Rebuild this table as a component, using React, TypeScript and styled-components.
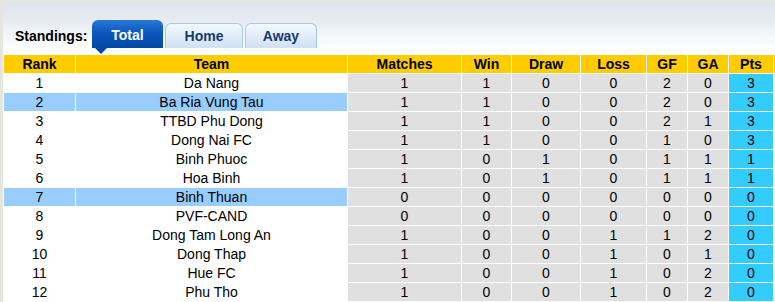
import React from "react"
import styled, { createGlobalStyle } from "styled-components"

const GlobalStyle = createGlobalStyle`
    html, body {
        margin: 0;
        padding: 0;
        overflow: hidden;
        background: #ffffff;
        font-family: "Liberation Sans", Arial, sans-serif;
    }
`

interface IRow {
    rank: number
    team: string
    stats: number[]
    pts: number
    hl?: boolean
}

const rows: IRow[] = [
    { rank: 1, team: "Da Nang", stats: [1, 1, 0, 0, 2, 0], pts: 3 },
    { rank: 2, team: "Ba Ria Vung Tau", stats: [1, 1, 0, 0, 2, 0], pts: 3, hl: true },
    { rank: 3, team: "TTBD Phu Dong", stats: [1, 1, 0, 0, 2, 1], pts: 3 },
    { rank: 4, team: "Dong Nai FC", stats: [1, 1, 0, 0, 1, 0], pts: 3 },
    { rank: 5, team: "Binh Phuoc", stats: [1, 0, 1, 0, 1, 1], pts: 1 },
    { rank: 6, team: "Hoa Binh", stats: [1, 0, 1, 0, 1, 1], pts: 1 },
    { rank: 7, team: "Binh Thuan", stats: [0, 0, 0, 0, 0, 0], pts: 0, hl: true },
    { rank: 8, team: "PVF-CAND", stats: [0, 0, 0, 0, 0, 0], pts: 0 },
    { rank: 9, team: "Dong Tam Long An", stats: [1, 0, 0, 1, 1, 2], pts: 0 },
    { rank: 10, team: "Dong Thap", stats: [1, 0, 0, 1, 0, 1], pts: 0 },
    { rank: 11, team: "Hue FC", stats: [1, 0, 0, 1, 0, 2], pts: 0 },
    { rank: 12, team: "Phu Tho", stats: [1, 0, 0, 1, 0, 2], pts: 0 },
]

const columns = [
    { title: "Rank", width: 71 },
    { title: "Team", width: 271 },
    { title: "Matches", width: 113 },
    { title: "Win", width: 49 },
    { title: "Draw", width: 68 },
    { title: "Loss", width: 65 },
    { title: "GF", width: 40 },
    { title: "GA", width: 40 },
    { title: "Pts", width: 44 },
    { title: "", width: 60 },
]

const SFrame = styled.div`
    padding: 3px 0 0 3px;
    background: #e6e6e1;
    width: 900px;
`

const SPanel = styled.div`
    background: linear-gradient(to bottom, #dfe5ee 0px, #e6eaf1 16px, #ffffff 46px);
`

const SHeader = styled.div`
    display: flex;
    align-items: flex-end;
    height: 51px;
`

const SLabel = styled.span`
    font-size: 14px;
    font-weight: bold;
    color: #000;
    margin-left: 12px;
    margin-bottom: 10px;
    width: 77px;
`

const STabs = styled.div`
    display: flex;
    align-items: flex-end;
    gap: 2px;
    margin-bottom: 6px;
`

const STab = styled.div<{ $active?: boolean; $w: number }>`
    position: relative;
    width: ${({ $w }) => $w}px;
    height: ${({ $active }) => ($active ? 28 : 25)}px;
    box-sizing: border-box;
    display: flex;
    align-items: center;
    justify-content: center;
    font-size: 14px;
    font-weight: bold;
    border-radius: 6px 6px 0 0;
    ${({ $active }) => $active ? `
        color: #ffffff;
        background: linear-gradient(to bottom, #2a78d6 0%, #0c58be 45%, #0047a6 100%);
        padding-top: 2px;
    ` : `
        color: #163a70;
        border: 1px solid #a8c8ea;
        border-bottom: none;
        background: linear-gradient(to bottom, #f3f8fd 0%, #e2edf9 50%, #cfe1f4 100%);
    `}
`

const SPointer = styled.span`
    position: absolute;
    left: 3px;
    bottom: -6px;
    width: 0;
    height: 0;
    border-left: 6px solid transparent;
    border-right: 6px solid transparent;
    border-top: 6px solid #0047a6;
`

const STable = styled.table`
    border-collapse: separate;
    border-spacing: 1px;
    table-layout: fixed;
    font-size: 14px;
    color: #000;
`

const STh = styled.th`
    background: #ffcc00;
    height: 18px;
    padding: 0;
    font-weight: bold;
    line-height: 18px;
    text-align: center;
`

type TCell = "name" | "hl" | "stat" | "pts" | "blank"

const cellBg: Record<TCell, string> = {
    name: "#ffffff",
    hl: "#99ccff",
    stat: "#e0e0e0",
    pts: "#33ccff",
    blank: "#ffffff",
}

const STd = styled.td<{ $kind: TCell }>`
    background: ${({ $kind }) => cellBg[$kind]};
    height: 18px;
    padding: 0;
    line-height: 18px;
    text-align: center;
    white-space: nowrap;
`

export default function App() {
    return (
        <>
            <GlobalStyle />
            <SFrame>
                <SPanel>
                    <SHeader>
                        <SLabel>Standings:</SLabel>
                        <STabs>
                            <STab $active $w={71}>
                                Total
                                <SPointer />
                            </STab>
                            <STab $w={78}>Home</STab>
                            <STab $w={72}>Away</STab>
                        </STabs>
                    </SHeader>
                    <STable>
                        <colgroup>
                            {columns.map((c, i) => (
                                <col key={i} style={{ width: c.width }} />
                            ))}
                        </colgroup>
                        <thead>
                            <tr>
                                {columns.map((c, i) => (
                                    <STh key={i}>{c.title}</STh>
                                ))}
                            </tr>
                        </thead>
                        <tbody>
                            {rows.map((r) => (
                                <tr key={r.rank}>
                                    <STd $kind={r.hl ? "hl" : "name"}>{r.rank}</STd>
                                    <STd $kind={r.hl ? "hl" : "name"}>{r.team}</STd>
                                    {r.stats.map((s, i) => (
                                        <STd key={i} $kind="stat">{s}</STd>
                                    ))}
                                    <STd $kind="pts">{r.pts}</STd>
                                    <STd $kind="blank" />
                                </tr>
                            ))}
                        </tbody>
                    </STable>
                </SPanel>
            </SFrame>
        </>
    )
}
